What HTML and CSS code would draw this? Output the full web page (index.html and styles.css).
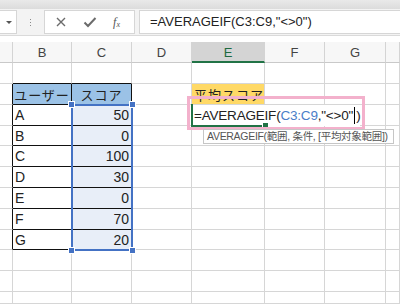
FILE: index.html
```html
<!DOCTYPE html>
<html lang="ja">
<head>
    <meta charset="UTF-8">
    <title>AVERAGEIF</title>
    <link rel="stylesheet" href="styles.css">
</head>
<body>
    <div class="ribbon"></div>

    <div class="formula-bar">
        <div class="name-box"><span class="caret"></span></div>
        <div class="grip"><i></i><i></i><i></i></div>
        <div class="fx-buttons">
            <svg class="btn-icon" width="12" height="12" viewBox="0 0 12 12">
                <path d="M2 2 L10 10 M10 2 L2 10" stroke="#6b6b6b" stroke-width="1.4" fill="none"/>
            </svg>
            <svg class="btn-icon" width="14" height="12" viewBox="0 0 14 12">
                <path d="M1.5 6.5 L5 10 L12.5 2" stroke="#6b6b6b" stroke-width="2" fill="none"/>
            </svg>
            <span class="fx">f<sub>x</sub></span>
        </div>
        <div class="formula-input">=AVERAGEIF(C3:C9,"&lt;&gt;0")</div>
    </div>

    <div class="col-headers">
        <div class="hcell col-a"></div>
        <div class="hcell col-b">B</div>
        <div class="hcell col-c">C</div>
        <div class="hcell col-d">D</div>
        <div class="hcell col-e active">E</div>
        <div class="hcell col-f">F</div>
        <div class="hcell col-g">G</div>
        <div class="hcell col-h"></div>
    </div>

    <div class="sheet" id="sheet"></div>

    <div class="selection">
        <span class="handle tl"></span><span class="handle tr"></span>
        <span class="handle bl"></span><span class="handle br"></span>
    </div>
    <div class="editor">=AVERAGEIF(<span class="ref">C3:C9</span>,"&lt;&gt;0"<span class="cursor"></span>)</div>
    <div class="edit-cell"><span class="fill-handle"></span></div>
    <div class="callout"></div>
    <div class="tooltip">AVERAGEIF(範囲, 条件, [平均対象範囲])</div>

    <script>
        const heights = [21, 21, 21, 20, 21, 21, 21, 21, 20, 21, 21, 12];
        const cols = ['a', 'b', 'c', 'd', 'e', 'f', 'g', 'h'];
        const data = [['A', 50], ['B', 0], ['C', 100], ['D', 30], ['E', 0], ['F', 70], ['G', 20]];

        const sheet = document.getElementById('sheet');
        heights.forEach((h, r) => {
            const row = document.createElement('div');
            row.className = 'row';
            row.style.height = h + 'px';
            cols.forEach(c => {
                const cell = document.createElement('div');
                cell.className = 'cell col-' + c;
                row.appendChild(cell);
            });
            const cells = row.children;
            if (r === 0) {
                cells[1].classList.add('top-edge');
                cells[2].classList.add('top-edge');
            }
            if (r === 1) {
                cells[0].classList.add('left-edge');
                cells[1].classList.add('tbl', 'head');
                cells[1].textContent = 'ユーザー';
                cells[2].classList.add('tbl', 'head');
                cells[2].textContent = 'スコア';
                cells[4].classList.add('title');
                cells[4].textContent = '平均スコア';
            }
            if (r >= 2 && r <= 8) {
                const item = data[r - 2];
                cells[0].classList.add('left-edge');
                cells[1].classList.add('tbl');
                cells[1].textContent = item[0];
                cells[2].classList.add('tbl', 'num');
                cells[2].textContent = item[1];
            }
            sheet.appendChild(row);
        });
    </script>
</body>
</html>
```

FILE: styles.css
```css
html, body {
    margin: 0;
    height: 100%;
    overflow: hidden;
    background-color: #ffffff;
    font-family: "Liberation Sans", "Noto Sans CJK JP", sans-serif;
}
body {
    position: relative;
}
.ribbon {
    height: 9px;
    background: linear-gradient(#e9e9e9, #dcdcdc);
}
.formula-bar {
    height: 27px;
    display: flex;
    align-items: flex-start;
    padding-top: 1px;
    box-sizing: border-box;
    background-color: #f3f3f3;
    border-bottom: 1px solid #dadada;
}
.name-box {
    width: 17px;
    height: 24px;
    background-color: #fff;
    border: 1px solid #d6d6d6;
    border-left: none;
    box-sizing: border-box;
    display: flex;
    align-items: center;
    justify-content: center;
}
.caret {
    margin-left: 2px;
    border-left: 3px solid transparent;
    border-right: 3px solid transparent;
    border-top: 3px solid #555;
}
.grip {
    width: 27px;
    height: 24px;
    display: flex;
    flex-direction: column;
    align-items: center;
    justify-content: center;
    gap: 2px;
}
.grip i {
    width: 1px;
    height: 1px;
    background-color: #8a8a8a;
}
.fx-buttons {
    width: 91px;
    height: 24px;
    background-color: #fff;
    border: 1px solid #d6d6d6;
    box-sizing: border-box;
    display: flex;
    align-items: center;
    justify-content: space-around;
    padding: 0 6px 0 2px;
}
.btn-icon {
    display: block;
}
.fx {
    font-family: "Liberation Serif", serif;
    font-style: italic;
    font-size: 12px;
    color: #555;
}
.fx sub {
    font-size: 8px;
    vertical-align: -1px;
}
.formula-input {
    margin-left: 4px;
    flex: 1;
    height: 24px;
    background-color: #fff;
    border: 1px solid #d6d6d6;
    border-right: none;
    box-sizing: border-box;
    padding-left: 10px;
    font-size: 13px;
    line-height: 22px;
    color: #222;
}
.col-headers {
    display: flex;
    height: 27px;
    padding-top: 6px;
    box-sizing: border-box;
    background-color: #fff;
}
.hcell {
    height: 21px;
    box-sizing: border-box;
    background-color: #f7f7f7;
    border-right: 1px solid #d4d4d4;
    border-bottom: 1px solid #c9c9c9;
    font-size: 13px;
    line-height: 21px;
    text-align: center;
    color: #444;
}
.hcell.active {
    background-color: #d4d4d4;
    border-bottom: 2px solid #217346;
    color: #1d6a3f;
}
.col-a { width: 13px; }
.col-b { width: 59px; }
.col-c { width: 60px; }
.col-d { width: 60px; }
.col-e { width: 73px; }
.col-f { width: 60px; }
.col-g { width: 61px; }
.col-h { width: 14px; }
.row {
    display: flex;
}
.cell {
    box-sizing: border-box;
    border-right: 1px solid #d6d6d6;
    border-bottom: 1px solid #d6d6d6;
    font-size: 14px;
    color: #222;
    white-space: nowrap;
    overflow: hidden;
    padding: 0 2px;
    display: flex;
    align-items: center;
}
.cell.top-edge {
    border-bottom-color: #111;
}
.cell.left-edge {
    border-right-color: #111;
}
.cell.tbl {
    border-right-color: #111;
    border-bottom-color: #111;
}
.cell.head {
    background-color: #9bc2e6;
    justify-content: center;
    font-family: "Noto Sans CJK JP", sans-serif;
    font-size: 13px;
    letter-spacing: 1px;
}
.cell.num {
    background-color: #e8eef8;
    justify-content: flex-end;
}
.cell.title {
    background-color: #ffd966;
    font-family: "Noto Sans CJK JP", sans-serif;
    font-size: 13px;
    align-items: flex-start;
    padding-top: 1px;
    letter-spacing: 1px;
}
.selection {
    position: absolute;
    left: 71px;
    top: 104px;
    width: 62px;
    height: 147px;
    box-sizing: border-box;
    border: 2px solid #4472c4;
}
.handle {
    position: absolute;
    width: 5px;
    height: 5px;
    background-color: #4472c4;
    border: 1px solid #fff;
}
.handle.tl { left: -5px; top: -5px; }
.handle.tr { right: -5px; top: -5px; }
.handle.bl { left: -5px; bottom: -5px; }
.handle.br { right: -5px; bottom: -5px; }
.editor {
    position: absolute;
    left: 192px;
    top: 105px;
    width: 168px;
    height: 21px;
    background-color: #fff;
    padding-left: 2px;
    box-sizing: border-box;
    font-size: 13.5px;
    line-height: 21px;
    letter-spacing: -0.2px;
    color: #222;
    white-space: nowrap;
}
.editor .ref {
    color: #4a7ec8;
}
.cursor {
    display: inline-block;
    width: 1px;
    height: 17px;
    background-color: #000;
    vertical-align: -4px;
    margin: 0 1px;
}
.edit-cell {
    position: absolute;
    left: 191px;
    top: 104px;
    width: 75px;
    height: 23px;
    box-sizing: border-box;
    border-left: 2px solid #217346;
    border-bottom: 2px solid #217346;
}
.fill-handle {
    position: absolute;
    right: -3px;
    bottom: -4px;
    width: 5px;
    height: 5px;
    background-color: #217346;
    border: 1px solid #fff;
}
.callout {
    position: absolute;
    left: 187px;
    top: 96px;
    width: 178px;
    height: 34px;
    box-sizing: border-box;
    border: 3px solid #f3b1cc;
}
.tooltip {
    position: absolute;
    left: 203px;
    top: 129px;
    width: 191px;
    height: 15px;
    box-sizing: border-box;
    background-color: #fff;
    border: 1px solid #c6c6c6;
    font-size: 10.5px;
    line-height: 13px;
    letter-spacing: -0.3px;
    padding-left: 3px;
    color: #555;
    white-space: nowrap;
    overflow: hidden;
}
```
